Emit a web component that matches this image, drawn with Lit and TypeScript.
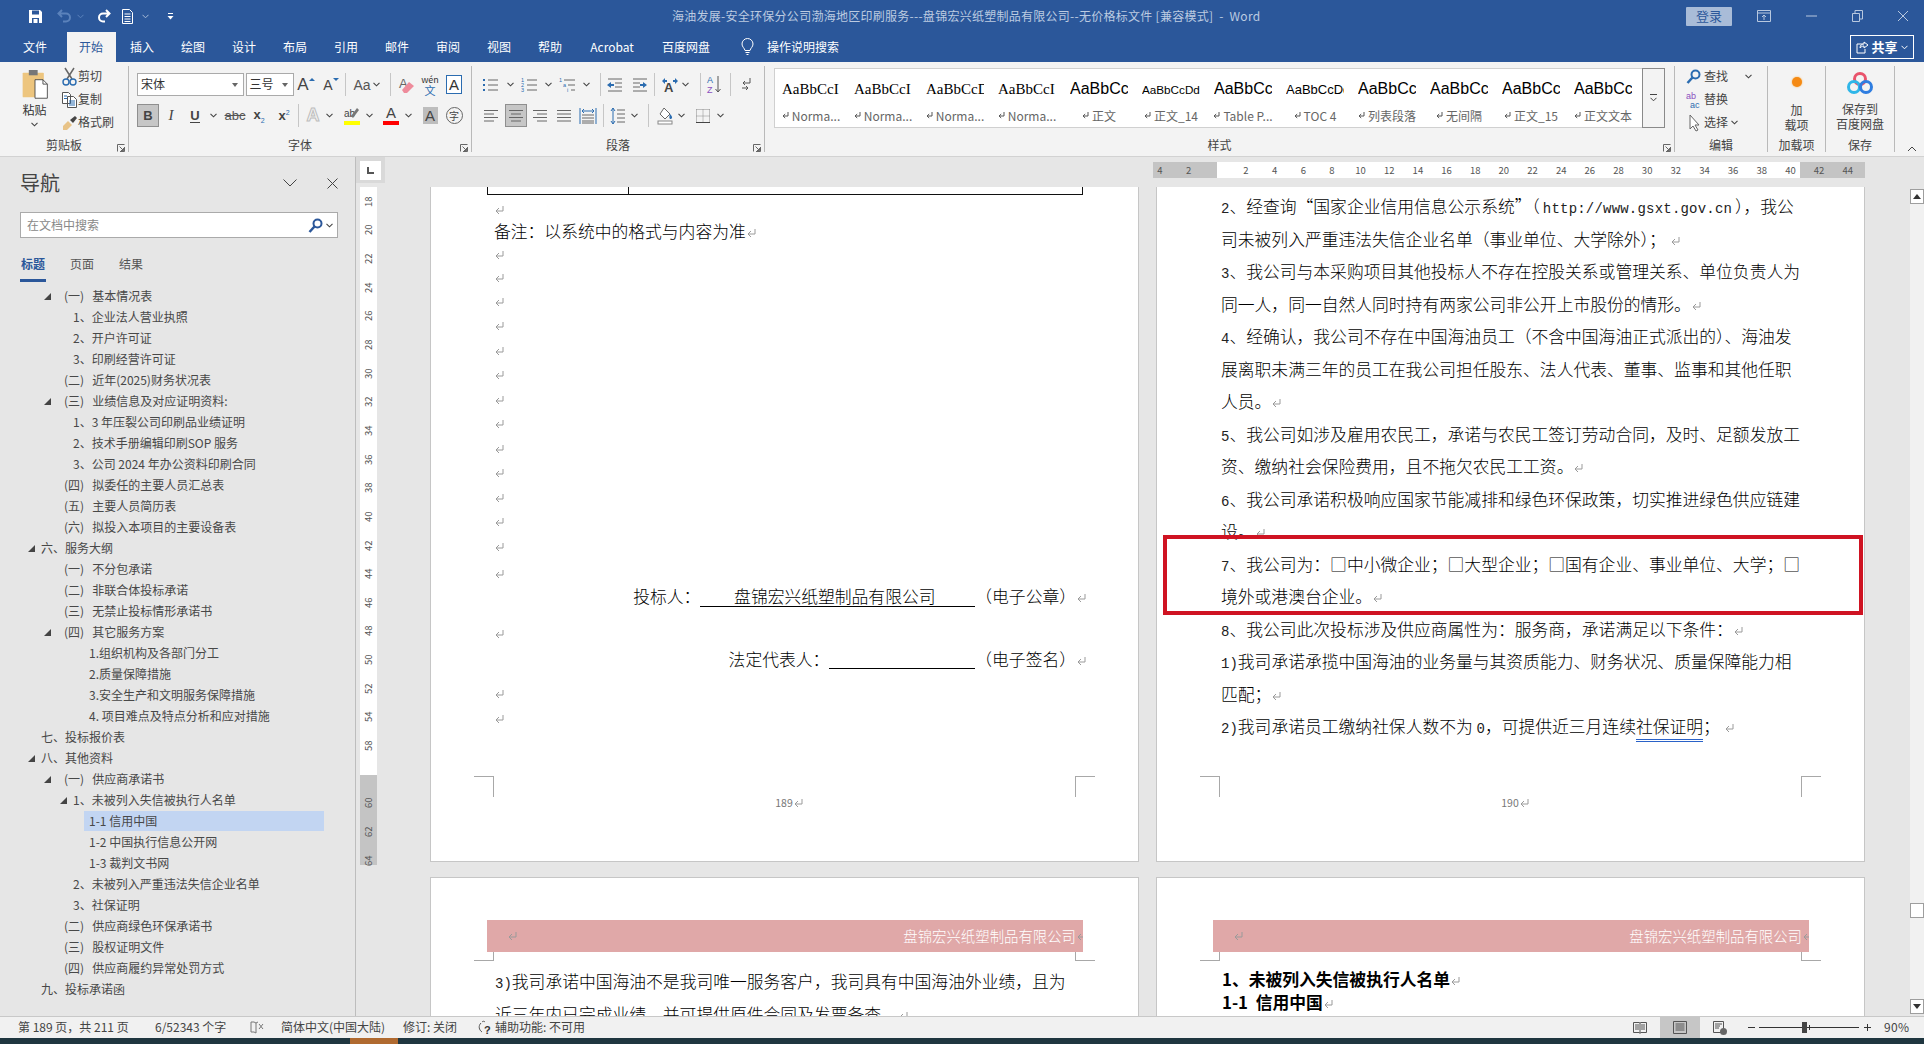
import { LitElement, html, css } from "lit";
import { customElement } from "lit/decorators.js";

type T = unknown;
const cells = (start: number, items: [number, number, T][]) => {
  let x = start;
  return items.map(([c, w, t]) => {
    const left = c - w / 2;
    const ml = left - x;
    x = left + w;
    return html`<span class="cell" style="width:${w}px;margin-left:${ml}px">${t}</span>`;
  });
};
const chev = html`<svg width="7" height="5" viewBox="0 0 7 5"><path d="M.5.8 3.5 3.8 6.5.8" fill="none" stroke="#444" stroke-width="1.1"/></svg>`;
const pm = html`<svg class="pm" width="11" height="11" viewBox="0 0 11 11"><path d="M9 1v5H2M5 3 2 6l3 3" fill="none" stroke="#9a9a9a" stroke-width="1"/></svg>`;
const pmd = html`<svg width="7" height="8" viewBox="0 0 7 8"><path d="M6 0v4H1.5M3.2 2 1 4l2.2 2" fill="none" stroke="#555" stroke-width="1"/></svg>`;
const launcher = html`<svg width="8" height="8" viewBox="0 0 8 8"><path d="M.5 7.5V.5h7M7.5 3v4.500H3M2.500 2.500 6.500 6.500M6.500 4v2.500H4" fill="none" stroke="#666" stroke-width="1"/></svg>`;

const tabs = ["文件", "开始", "插入", "绘图", "设计", "布局", "引用", "邮件", "审阅", "视图", "帮助", "Acrobat", "百度网盘"];
const tabCx = [35, 91, 142, 193, 244, 295, 346, 397, 448, 499, 550, 612, 686];

type Nav = [number, number, string, boolean?];
const nav: Nav[] = [
  [64, 44, "(一)   基本情况表"], [73, 0, "1、企业法人营业执照"], [73, 0, "2、开户许可证"], [73, 0, "3、印刷经营许可证"],
  [64, 0, "(二)   近年(2025)财务状况表"], [64, 44, "(三)   业绩信息及对应证明资料:"], [73, 0, "1、3 年压裂公司印刷品业绩证明"],
  [73, 0, "2、技术手册编辑印刷SOP 服务"], [73, 0, "3、公司 2024 年办公资料印刷合同"], [64, 0, "(四)   拟委任的主要人员汇总表"],
  [64, 0, "(五)   主要人员简历表"], [64, 0, "(六)   拟投入本项目的主要设备表"], [41, 28, "六、服务大纲"], [64, 0, "(一)   不分包承诺"],
  [64, 0, "(二)   非联合体投标承诺"], [64, 0, "(三)   无禁止投标情形承诺书"], [64, 44, "(四)   其它服务方案"], [89, 0, "1.组织机构及各部门分工"],
  [89, 0, "2.质量保障措施"], [89, 0, "3.安全生产和文明服务保障措施"], [89, 0, "4. 项目难点及特点分析和应对措施"], [41, 0, "七、投标报价表"],
  [41, 28, "八、其他资料"], [64, 44, "(一)   供应商承诺书"], [73, 60, "1、未被列入失信被执行人名单"], [89, 0, "1-1 信用中国", true],
  [89, 0, "1-2 中国执行信息公开网"], [89, 0, "1-3 裁判文书网"], [73, 0, "2、未被列入严重违法失信企业名单"], [73, 0, "3、社保证明"],
  [64, 0, "(二)   供应商绿色环保承诺书"], [64, 0, "(三)   股权证明文件"], [64, 0, "(四)   供应商履约异常处罚方式"], [41, 0, "九、投标承诺函"],
];

const styles: [string, string, string][] = [
  ["AaBbCcI", "serif", "Norma..."], ["AaBbCcI", "serif", "Norma..."], ["AaBbCcD", "serif", "Norma..."], ["AaBbCcI", "serif", "Norma..."],
  ["AaBbCc", "sans", "正文"], ["AaBbCcDd", "small", "正文_14"], ["AaBbCc", "sans", "Table P..."], ["AaBbCcDd", "toc", "TOC 4"],
  ["AaBbCc", "sans", "列表段落"], ["AaBbCc", "sans", "无间隔"], ["AaBbCc", "sans", "正文_15"], ["AaBbCc", "sans", "正文文本"],
];

const hLabels = ["4", "2", "", ...Array.from({ length: 22 }, (_, i) => String((i + 1) * 2))];
const vLabels = [...Array.from({ length: 19 }, (_, i) => String(18 + i * 2)), "58", "", "60", "62", "64"];

const leftMarks = [209, 232, 254, 277, 301, 325, 350, 374, 399, 423, 448, 472, 497, 521, 546, 573, 597, 633, 658, 693, 718];

@customElement("app-root")
export class AppRoot extends LitElement {
  static styles = css`
    :host { display: block; width: 1924px; height: 1044px; overflow: hidden; position: relative; background: #e6e6e6; color: #444;
      font: 12px/1.2 "Noto Sans CJK SC", "Liberation Sans", sans-serif; }
    svg { display: block; flex: none; }
    .cell { display: inline-flex; align-items: center; justify-content: center; height: 100%; flex: none; white-space: nowrap; }
    .title { height: 32px; background: #2b579a; display: flex; align-items: center; color: #fff; }
    .qat { width: 672px; height: 30px; display: flex; align-items: center; flex: none; }
    .wtitle { width: 588px; flex: none; color: #bccbe1; white-space: pre; font-size: 12px; letter-spacing: .27px; text-align: center; }
    .login { margin-left: 426px; width: 46px; height: 19px; background: #a9bcd8; color: #2b579a; border-radius: 1px; display: flex; align-items: center; justify-content: center; font-size: 13px; flex: none; }
    .wbtns { height: 30px; display: flex; align-items: center; }
    .tabs { height: 30px; background: #2b579a; display: flex; align-items: stretch; color: #fff; }
    .tab-on { background: #f3f3f3; color: #2b579a; height: 100%; width: 100%; display: flex; align-items: center; justify-content: center; }
    .share { margin: 3px 10px 3px 0; width: 64px; box-sizing: border-box; border: 1px solid #fff; display: flex; align-items: center; justify-content: center; gap: 3px; font-weight: 700; font-size: 13px; height: 24px; }
    .ribbon { height: 94px; background: #f3f3f3; border-bottom: 1px solid #d2d2d2; display: flex; box-sizing: content-box; padding: 0; position: relative; }
    .grp { height: 86px; margin-top: 4px; border-right: 1px solid #b9b9b9; box-sizing: border-box; position: relative; display: flex; flex-direction: column; flex: none; }
    .grp .rb { height: 71px; flex: none; }
    .grp .lbl { height: 15px; line-height: 15px; display: flex; justify-content: center; align-items: center; color: #444; position: relative; }
    .lbl .lch { position: absolute; right: 3px; top: 7px; }
    .clip { display: flex; }
    .paste { width: 69px; padding-top: 4px; display: flex; flex-direction: column; align-items: center; box-sizing: border-box; padding-right: 0; }
    .paste span { margin-top: 2px; font-size: 12px; color: #333; line-height: 16px; }
    .paste svg:last-child { margin-top: 4px; }
    .cliprows { display: flex; flex-direction: column; gap: 2px; margin-left: -7px; }
    .cliprows div { display: flex; align-items: center; height: 21px; gap: 1px; color: #444; font-size: 12px; }
    .frow { display: flex; height: 23px; }
    .frow.one { margin-top: 7px; }
    .frow.two { margin-top: 8px; }
    .sel { height: 23px; box-sizing: border-box; background: #fff; border: 1px solid #aaa; width: 100%; display: flex; align-items: center; justify-content: space-between; padding: 0 5px 0 3px; font-size: 12px; color: #333; }
    .caret { width: 0; height: 0; border: 3.500px solid transparent; border-top: 4px solid #666; border-bottom: 0; }
    .sep { width: 1px; height: 23px; background: #c6c6c6; }
    .bigA { font: 17px "Liberation Sans", sans-serif; color: #444; position: relative; }
    .smA { font-size: 14px; }
    .up { width: 0; height: 0; border: 3px solid transparent; border-bottom: 3px solid #2b6cb0; border-top: 0; align-self: flex-start; margin-top: 5px; }
    .dn { width: 0; height: 0; border: 3px solid transparent; border-top: 3px solid #2b6cb0; border-bottom: 0; align-self: flex-start; margin-top: 5px; }
    .aa { font: 14px "Liberation Sans", sans-serif; color: #555; }
    .wen { display: flex; flex-direction: column; align-items: center; line-height: 10px; font-size: 9px; color: #333; }
    .wen b { font-weight: 400; color: #2b6cb0; font-size: 11px; }
    .abox { border: 1px solid #2b6cb0; width: 14px; height: 17px; display: flex; align-items: center; justify-content: center; font: 15px "Liberation Sans", sans-serif; color: #333; background: #fff; }
    .on { background: #c6c6c6; outline: 1px solid #8f8f8f; outline-offset: -1px; }
    .fb { font: 700 13px "Liberation Sans", sans-serif; color: #444; }
    .fi { font: italic 15px "Liberation Serif", serif; color: #444; }
    .fu { font: 700 13px "Liberation Sans", sans-serif; color: #444; border-bottom: 1px solid #444; line-height: 13px; }
    .abc { font: 13px "Liberation Sans", sans-serif; color: #555; text-decoration: line-through; }
    .xs { font: 700 13px "Liberation Sans", sans-serif; color: #444; }
    .xs sub, .xs sup { font: 7px "Liberation Sans", sans-serif; color: #2b6cb0; }
    .oa { font: 700 18px "Liberation Sans", sans-serif; color: #f3f3f3; -webkit-text-stroke: 1px #bdbdbd; }
    .barA { display: flex; flex-direction: column; align-items: center; font: 15px/14px "Liberation Sans", sans-serif; color: #444; width: 16px; }
    .barA i { display: block; width: 16px; height: 4px; margin-top: 1px; }
    .gA { background: #bdbdbd; width: 15px; height: 17px; display: flex; align-items: center; justify-content: center; font: 15px "Liberation Sans", sans-serif; color: #444; }
    .zi { width: 15px; height: 15px; border: 1px solid #666; border-radius: 50%; display: flex; align-items: center; justify-content: center; font-size: 10px; color: #444; }
    .gallery { width: 891px; height: 60px; margin: 2px 0 0 9px; background: #fff; border: 1px solid #d0d0d0; box-sizing: border-box; display: flex; }
    .sty { width: 72px; height: 100%; flex: none; display: flex; flex-direction: column; align-items: center; box-sizing: border-box; overflow: hidden; }
    .smp { height: 38px; width: 58px; overflow: hidden; display: flex; align-items: center; white-space: nowrap; color: #000; margin-top: 1px; }
    .smp.serif { font: 15px "Liberation Serif", serif; }
    .smp.sans { font: 16px "Liberation Sans", sans-serif; }
    .smp.small { font: 11.700px "Liberation Sans", sans-serif; }
    .smp.toc { font: 13px "Liberation Sans", sans-serif; }
    .stl { display: flex; align-items: center; gap: 3px; color: #666; font-size: 12px; height: 16px; white-space: nowrap; }
    .more { width: 23px; flex: none; border: 1px solid #8a8a8a; background: #f3f3f3; box-sizing: border-box; margin: -1px -1px -1px auto; display: flex; flex-direction: column; align-items: center; justify-content: center; gap: 2px; }
    .more i { display: block; width: 7px; height: 1px; background: #444; }
    .edit { display: flex; flex-direction: column; gap: 2px; padding-left: 11px; }
    .edit div { display: flex; align-items: center; gap: 3px; height: 21px; font-size: 12px; }
    .addin { display: flex; flex-direction: column; align-items: center; color: #444; font-size: 12px; line-height: 15px; text-align: center; }
    .dot { width: 10px; height: 10px; border-radius: 50%; background: #f58a14; box-shadow: 0 0 2px #f9b04f; margin: 11px 0 15px; }
    .baidu { margin: 5px 0 6px; }
    .coll { position: absolute; left: 1907px; top: 84px; }
    .main { height: 859px; display: flex; overflow: hidden; }
    .nav { width: 356px; flex: none; box-sizing: border-box; border-right: 1px solid #bdbdbd; background: #e6e6e6; position: relative; }
    .navh { display: flex; align-items: center; height: 40px; padding: 6px 0 0 20px; box-sizing: content-box; }
    .navh h2 { margin: 0; font-size: 20px; font-weight: 400; color: #444; width: 263px; line-height: 40px; }
    .navh svg:last-child { margin-left: 30px; }
    .search { margin: 9px 0 0 20px; width: 318px; height: 26px; background: #fff; border: 1px solid #aaa; box-sizing: border-box; display: flex; align-items: center; padding: 0 4px 0 6px; color: #888; }
    .search span { flex: 1; }
    .ntabs { display: flex; margin: 19px 0 0 21px; height: 27px; gap: 25px; font-size: 12px; color: #555; }
    .ntabs .act { color: #2b579a; font-weight: 700; position: relative; }
    .ntabs .act::after { content: ""; position: absolute; left: -1px; right: -1px; top: 22px; height: 3px; background: #2b579a; }
    .tree { margin-top: 2px; }
    .nr { height: 21px; display: flex; align-items: center; white-space: pre; color: #484848; font-size: 12px; }
    .nr.hl { background: #c2d5f2; height: 20px; margin: 0 0 1px 84px; width: 240px; padding-left: 5px; box-sizing: border-box; }
    .work { flex: 1; display: flex; flex-direction: column; min-width: 0; }
    .top { height: 30px; display: flex; flex: none; }
    .lbox { width: 29px; height: 26px; background: #d9d9d9; display: flex; align-items: center; justify-content: center; flex: none; }
    .lbox div { width: 21px; height: 19px; background: #fff; display: flex; align-items: center; justify-content: center; }
    .hr { margin: 5px 0 0 760.670px; height: 16px; width: 720px; display: flex; font-size: 9.500px; color: #555;
      background: linear-gradient(90deg, transparent 7.330px, #c4c4c4 7.330px, #c4c4c4 71.330px, #fff 71.330px, #fff 654.330px, #c4c4c4 654.330px, #c4c4c4 719.330px, transparent 719.330px); }
    .hr span { width: 28.670px; flex: none; text-align: center; line-height: 16px; }
    .wb { flex: 1; display: flex; min-height: 0; }
    .vr { width: 17px; margin: 0 0 0 4px; flex: none; height: 678px; display: flex; flex-direction: column; font-size: 9.500px; color: #555;
      background: linear-gradient(180deg, #fff 0, #fff 588px, #c4c4c4 588px, #c4c4c4 678px); }
    .vr span { height: 28.670px; flex: none; display: flex; align-items: center; justify-content: center; }
    .vr span b { font-weight: 400; transform: rotate(-90deg); display: block; }
    .pages { margin-left: 53px; display: grid; grid-template-columns: 709px 709px; grid-auto-rows: 675px; column-gap: 17px; row-gap: 15px; flex: none; width: 1435px; }
    .page { background: #fff; border: 1px solid #c6c6c6; border-top: 0; box-sizing: border-box; display: flex; flex-direction: column; color: #000; position: relative; }
    .page.b { border-top: 1px solid #c6c6c6; }
    .pm { display: inline-block; vertical-align: -1px; }
    .pmx { margin-left: 4px; }
    .dt { font: 300 16.800px/32.500px "Noto Sans CJK SC", sans-serif; white-space: pre; }
    .m { font: 14px "Liberation Mono", monospace; color: #222; }
    .url { letter-spacing: .2px; margin: 0 3px; }
    .rtext { padding: 3px 0 0 64px; }
    .dbl { border-bottom: 3px double #2a62c8; padding-bottom: 1px; }
    .foot { margin-top: auto; height: 85px; flex: none; display: flex; align-items: flex-start; justify-content: space-between; padding: 0 43px; box-sizing: border-box; }
    .mk { width: 20px; height: 21px; box-sizing: border-box; border-top: 1px solid #a8a8a8; }
    .mk.l { border-right: 1px solid #a8a8a8; }
    .mk.r { border-left: 1px solid #a8a8a8; }
    .pn { margin: 19px 0 0 10px; font-size: 10.500px; line-height: 16px; color: #777; display: flex; align-items: center; }
    .tbl { margin-left: 56px; width: 596px; height: 8px; flex: none; border: 1.500px solid #111; border-top: 0; box-sizing: border-box; }
    .tbl div { width: 140px; height: 100%; border-right: 1.500px solid #111; }
    .lr { height: 20px; padding-left: 63px; display: block; flex: none; font: 300 16.800px/20px "Noto Sans CJK SC", sans-serif; white-space: pre; }
    .lr.end { padding: 0 51px 0 0; text-align: right; }
    .u1 { width: 275px; border-bottom: 1px solid #000; text-align: center; display: inline-block; line-height: 20px; height: 21px; box-sizing: border-box; padding-right: 6px; }
    .u2 { width: 146px; border-bottom: 1px solid #000; display: inline-block; height: 21px; vertical-align: bottom; }
    .hdr { margin: 42px 0 0 56px; width: 596px; height: 32px; flex: none; background: #e0a8a8; color: #fff; display: flex; align-items: center; justify-content: space-between; padding: 0 0 0 20px; font-size: 14.400px; font-weight: 300; box-sizing: border-box; overflow: hidden; }
    .hdr div { display: flex; align-items: center; }
    .hdr div:last-child .pm { margin-right: -4px; }
    .hmk { display: flex; justify-content: space-between; padding: 0 43px; height: 9px; flex: none; }
    .hmk div { width: 20px; height: 9px; box-sizing: border-box; border-bottom: 1px solid #a8a8a8; }
    .hmk .l { border-right: 1px solid #a8a8a8; }
    .hmk .r { border-left: 1px solid #a8a8a8; }
    .ptxt { padding: 4px 0 0 64px; }
    .ptxt2 { padding: 7px 0 0 65px; }
    .ptxt2 .dt { font-weight: 700; line-height: 23px; }
    .redbox { position: absolute; left: 6px; top: 348px; width: 700px; height: 80px; box-sizing: border-box; border: 4px solid #cf1322; pointer-events: none; }
    .sb { width: 14px; height: 825px; margin: 2px 0 0 auto; background: #f1f1f1; display: flex; flex-direction: column; flex: none; }
    .sb div { height: 15px; width: 14px; box-sizing: border-box; background: #fff; border: 1px solid #9e9e9e; display: flex; align-items: center; justify-content: center; flex: none; }
    .sb .thumb { margin-top: 699px; }
    .sb .dnb { margin-top: auto; }
    .status { height: 22px; box-sizing: border-box; background: #f1f1f1; border-top: 1px solid #c8c8c8; display: flex; align-items: stretch; font-size: 12px; color: #444; }
    .status .cell { justify-content: flex-start; }
    .vb { width: 40px; display: flex; align-items: center; justify-content: center; flex: none; }
    .vb.act { background: #c6c6c6; }
    .slider { width: 100px; height: 1px; background: #333; position: relative; align-self: center; flex: none; margin-left: 3px; }
    .slider i { position: absolute; left: 43px; top: -5px; width: 5px; height: 11px; background: #444; }
    .slider b { position: absolute; left: 50px; top: -2px; width: 1px; height: 5px; background: #333; }
    .strip { height: 6px; background: #1f3640; display: flex; }
    .strip i { display: block; width: 48px; margin-left: 350px; background: #b06a30; }
  `;

  private font1() {
    return cells(129, [
      [190.5, 107, html`<div class="sel"><span>宋体</span><i class="caret"></i></div>`],
      [269.5, 48, html`<div class="sel"><span>三号</span><i class="caret"></i></div>`],
      [306, 22, html`<span class="bigA">A</span><i class="up"></i>`],
      [331, 22, html`<span class="bigA smA">A</span><i class="dn"></i>`],
      [345, 1, html`<i class="sep"></i>`],
      [362, 22, html`<span class="aa">Aa</span>`],
      [376, 8, chev],
      [390, 1, html`<i class="sep"></i>`],
      [406, 20, html`<svg width="17" height="18" viewBox="0 0 17 18"><text x="1" y="12" font-size="13" font-family="Liberation Sans" fill="#666">A</text><path d="M4 14 11 6l5 4-7 7H6z" fill="#ee8b9b"/></svg>`],
      [430, 20, html`<span class="wen">wén<b>文</b></span>`],
      [454, 18, html`<span class="abox">A</span>`],
    ]);
  }
  private font2() {
    return cells(129, [
      [148, 22, html`<span class="cell on" style="width:22px"><span class="fb">B</span></span>`],
      [171, 16, html`<span class="fi">I</span>`],
      [195, 16, html`<span class="fu">U</span>`],
      [213, 8, chev],
      [235, 22, html`<span class="abc">abc</span>`],
      [259, 18, html`<span class="xs">x<sub>2</sub></span>`],
      [284, 18, html`<span class="xs">x<sup>2</sup></span>`],
      [298, 1, html`<i class="sep"></i>`],
      [313, 18, html`<span class="oa">A</span>`],
      [329, 8, chev],
      [352, 18, html`<span class="barA"><svg width="16" height="13" viewBox="0 0 16 13"><text x="0" y="10" font-size="10" font-family="Liberation Sans" fill="#444">ab</text><path d="M9 11 15 3l-2-2-6 8z" fill="#777"/></svg><i style="background:#ff0"></i></span>`],
      [369, 8, chev],
      [391, 18, html`<span class="barA">A<i style="background:#f00"></i></span>`],
      [408, 8, chev],
      [430, 16, html`<span class="gA">A</span>`],
      [454, 18, html`<span class="zi">字</span>`],
    ]);
  }
  private para1() {
    const bul = html`<svg width="18" height="16" viewBox="0 0 18 16"><path d="M1 2h2v2H1zM1 7h2v2H1zM1 12h2v2H1z" fill="#2b6cb0"/><path d="M6 3h10M6 8h10M6 13h10" stroke="#666"/></svg>`;
    const num = html`<svg width="18" height="16" viewBox="0 0 18 16"><text y="5" font-size="5.500" fill="#2b6cb0" font-family="Liberation Sans">1</text><text y="10" font-size="5.500" fill="#2b6cb0" font-family="Liberation Sans">2</text><text y="15" font-size="5.500" fill="#2b6cb0" font-family="Liberation Sans">3</text><path d="M6 3h10M6 8h10M6 13h10" stroke="#666"/></svg>`;
    const ml = html`<svg width="18" height="16" viewBox="0 0 18 16"><text y="5" font-size="5.500" fill="#2b6cb0" font-family="Liberation Sans">1</text><text x="4" y="10" font-size="5.500" fill="#2b6cb0" font-family="Liberation Sans">a</text><text x="8" y="15" font-size="5.500" fill="#2b6cb0" font-family="Liberation Sans">i</text><path d="M5 3h11M9 8h7M12 13h4" stroke="#666"/></svg>`;
    const indL = html`<svg width="18" height="16" viewBox="0 0 18 16"><path d="M2 2h14M9 6h7M9 10h7M2 14h14" stroke="#666"/><path d="M1 8l4-3v2h3v2H5v2z" fill="#2b6cb0"/></svg>`;
    const indR = html`<svg width="18" height="16" viewBox="0 0 18 16"><path d="M2 2h14M2 6h7M2 10h7M2 14h14" stroke="#666"/><path d="M16 8l-4-3v2H9v2h3v2z" fill="#2b6cb0"/></svg>`;
    return cells(472, [
      [491, 18, bul], [510, 8, chev], [530, 18, num], [548, 8, chev], [568, 18, ml], [586, 8, chev],
      [600, 1, html`<i class="sep"></i>`], [615, 18, indL], [640, 18, indR],
      [654, 1, html`<i class="sep"></i>`],
      [670, 18, html`<svg width="18" height="16" viewBox="0 0 18 16"><text x="3" y="15" font-size="13" font-weight="700" font-family="Liberation Sans" fill="#444">A</text><path d="M1 4l3-3v2h2v2H4v2zM17 4l-3-3v2h-2v2h2v2z" fill="#2b6cb0"/></svg>`],
      [685, 8, chev], [700, 1, html`<i class="sep"></i>`],
      [715, 18, html`<svg width="18" height="20" viewBox="0 0 18 20"><text x="1" y="8" font-size="9" font-family="Liberation Sans" fill="#2b6cb0">A</text><text x="1" y="18" font-size="9" font-family="Liberation Sans" fill="#8a4fc0">Z</text><path d="M12 1v16M9.500 14l2.500 3 2.500-3" fill="none" stroke="#555"/></svg>`],
      [730, 1, html`<i class="sep"></i>`],
      [746, 14, html`<svg width="12" height="16" viewBox="0 0 12 16"><path d="M10 1v5H3M5 4 3 6l2 2M2 11h6M6 9l2 2-2 2" fill="none" stroke="#555"/></svg>`],
    ]);
  }
  private para2() {
    const al = (r: number[]) => html`<svg width="16" height="14" viewBox="0 0 16 14"><path d="M${r[0]} 1.500H${r[1]}M${r[2]} 5H${r[3]}M${r[0]} 8.500H${r[1]}M${r[2]} 12H${r[3]}" stroke="#666"/></svg>`;
    return cells(472, [
      [491, 18, al([1, 15, 1, 11])],
      [516, 22, html`<span class="cell on" style="width:22px">${al([1, 15, 3, 13])}</span>`],
      [540, 18, al([1, 15, 5, 15])],
      [564, 18, al([1, 15, 1, 15])],
      [588, 18, html`<svg width="18" height="18" viewBox="0 0 18 18"><path d="M1 1v16M17 1v16" stroke="#2b6cb0"/><path d="M3 4h12M5 2 3 4l2 2M13 2l2 2-2 2" fill="none" stroke="#2b6cb0"/><path d="M3 8h12M3 11h12M3 14h12M3 16h12" stroke="#666"/></svg>`],
      [603, 1, html`<i class="sep"></i>`],
      [618, 18, html`<svg width="16" height="18" viewBox="0 0 16 18"><path d="M3 1v16M1 4l2-3 2 3M1 14l2 3 2-3" fill="none" stroke="#2b6cb0"/><path d="M7 3h8M7 7h8M7 11h8M7 15h8" stroke="#666"/></svg>`],
      [634, 8, chev],
      [648, 1, html`<i class="sep"></i>`],
      [665, 18, html`<svg width="17" height="18" viewBox="0 0 17 18"><path d="M7 1l6 6-5 5-5-5z" fill="#fff" stroke="#666"/><path d="M13 7c2 2 3 4 1 5-2 0-2-2-1-5z" fill="#2b6cb0"/><rect x="1" y="14" width="14" height="3" fill="#fff" stroke="#888"/></svg>`],
      [681, 8, chev],
      [703, 16, html`<svg width="14" height="14" viewBox="0 0 14 14"><path d="M.5.500h13M.5 7h13M.5.500v13M7 .500v13M13.500.500v13" stroke="#888" stroke-dasharray="1 1" fill="none"/><path d="M0 13.500h14" stroke="#444"/></svg>`],
      [720, 8, chev],
    ]);
  }

  render() {
    return html`
      <div class="title">
        <div class="qat">${cells(0, [
          [35, 16, html`<svg width="15" height="15" viewBox="0 0 15 15"><path d="M1 1h11l2 2v11H1z" fill="#fff"/><rect x="4" y="1.500" width="7" height="4" fill="#2b579a"/><rect x="4" y="9" width="7" height="5" fill="#2b579a"/><rect x="5.500" y="10" width="4" height="4" fill="#fff"/></svg>`],
          [64, 16, html`<svg width="15" height="14" viewBox="0 0 15 14"><path d="M5 1 1.500 4.500 5 8M2 4.500h7a4 4 0 0 1 0 8H6" fill="none" stroke="#5b82bb" stroke-width="2"/></svg>`],
          [80, 8, html`<svg width="7" height="5" viewBox="0 0 7 5"><path d="M.5.8 3.500 3.800 6.500.8" fill="none" stroke="#5b82bb"/></svg>`],
          [103, 16, html`<svg width="15" height="14" viewBox="0 0 15 14"><path d="M10 1l3.500 3.500L10 8M13 4.500H7a4 4 0 0 0 0 8h2" fill="none" stroke="#fff" stroke-width="2"/></svg>`],
          [127, 14, html`<svg width="11" height="15" viewBox="0 0 11 15"><path d="M.5.500h7l3 3v11H.5z" fill="none" stroke="#fff"/><path d="M2.500 5h6M2.500 7.500h6M2.500 10h6M2.500 12.500h6" stroke="#fff"/></svg>`],
          [145, 8, html`<svg width="7" height="5" viewBox="0 0 7 5"><path d="M.5.8 3.500 3.800 6.500.8" fill="none" stroke="#a9bcd8"/></svg>`],
          [170, 8, html`<svg width="7" height="7" viewBox="0 0 7 7"><path d="M1 .5h5" stroke="#fff"/><path d="M.5 3h6L3.500 6.500z" fill="#fff"/></svg>`],
        ])}</div>
        <div class="wtitle">海油发展-安全环保分公司渤海地区印刷服务---盘锦宏兴纸塑制品有限公司--无价格标文件 [兼容模式]  -  Word</div>
        <div class="login">登录</div>
        <div class="wbtns">${cells(1732, [
          [1764, 16, html`<svg width="14" height="12" viewBox="0 0 14 12"><path d="M.5.500h13v11H.5zM.5 3h13M7 10V5M5 7l2-2 2 2" fill="none" stroke="#b8c8df"/></svg>`],
          [1811, 16, html`<svg width="11" height="2" viewBox="0 0 11 2"><path d="M0 1h11" stroke="#b8c8df"/></svg>`],
          [1857, 16, html`<svg width="11" height="12" viewBox="0 0 11 12"><path d="M.5 3.500h7v8h-7zM3 3.500V.500h7.500V9H8" fill="none" stroke="#b8c8df"/></svg>`],
          [1903, 16, html`<svg width="12" height="12" viewBox="0 0 12 12"><path d="M1 1l10 10M11 1 1 11" stroke="#b8c8df"/></svg>`],
        ])}</div>
      </div>
      <div class="tabs">
        ${cells(0, tabs.map((t, i) => [tabCx[i], t === "Acrobat" ? 50 : t === "百度网盘" ? 50 : t === "文件" ? 40 : 49, i === 1 ? html`<span class="tab-on">${t}</span>` : t] as [number, number, T]))}
        <span class="cell" style="width:18px;margin-left:27px"><svg width="13" height="18" viewBox="0 0 13 18"><path d="M4 12.500C3.500 10 1 9 1 6a5.500 5.500 0 0 1 11 0c0 3-2.500 4-3 6.500zM4.500 14.500h4M5.500 16.500h2" fill="none" stroke="#fff"/></svg></span>
        <span class="cell" style="width:72px;margin-left:11px">操作说明搜索</span>
        <span style="flex:1"></span>
        <div class="share"><svg width="12" height="14" viewBox="0 0 12 14"><path d="M7 4H1v9h8V9M4 8c0-3 2-4 4-4V2l4 3-4 3V6C6 6 5 7 4 8z" fill="none" stroke="#fff"/></svg>共享<svg width="7" height="5" viewBox="0 0 7 5"><path d="M.5.8 3.500 3.800 6.500.8" fill="none" stroke="#fff"/></svg></div>
      </div>
      <div class="ribbon">
        <div class="grp" style="width:129px">
          <div class="rb clip">
            <div class="paste">
              <svg width="30" height="30" viewBox="0 0 30 34"><rect x="1" y="3" width="24" height="28" rx="1" fill="#edc57e"/><rect x="8" y="0" width="10" height="6" fill="#777"/><path d="M15 11h9l5 5v16H15z" fill="#fff" stroke="#444"/><path d="M24 11v5h5" fill="none" stroke="#444"/></svg>
              <span>粘贴</span>${chev}
            </div>
            <div class="cliprows">
              <div><svg width="15" height="19" viewBox="0 0 15 19"><path d="M3 1l7 11M12 1 5 12" stroke="#666" stroke-width="1.500"/><circle cx="4" cy="15" r="3" fill="none" stroke="#2b6cb0" stroke-width="1.400"/><circle cx="11" cy="15" r="3" fill="none" stroke="#2b6cb0" stroke-width="1.400"/></svg><span>剪切</span></div>
              <div><svg width="15" height="16" viewBox="0 0 15 16"><path d="M.5.500h6l2 2v9h-8zM5.500 4.500h6l3 3v8h-9z" fill="#fff" stroke="#555"/><path d="M2 4h3M2 6.500h3M7 9h6M7 11h6M7 13h6" stroke="#2b6cb0"/></svg><span>复制</span></div>
              <div><svg width="15" height="16" viewBox="0 0 15 16"><path d="M1 11l5-5 4 4-5 5-4 0z" fill="#e8c387"/><path d="M8 5l5-4 2 2-4 5z" fill="#444"/></svg><span>格式刷</span></div>
            </div>
          </div>
          <div class="lbl">剪贴板<span class="lch">${launcher}</span></div>
        </div>
        <div class="grp" style="width:343px">
          <div class="rb"><div class="frow one">${this.font1()}</div><div class="frow two">${this.font2()}</div></div>
          <div class="lbl">字体<span class="lch">${launcher}</span></div>
        </div>
        <div class="grp" style="width:293px">
          <div class="rb"><div class="frow one">${this.para1()}</div><div class="frow two">${this.para2()}</div></div>
          <div class="lbl">段落<span class="lch">${launcher}</span></div>
        </div>
        <div class="grp" style="width:910px">
          <div class="rb">
            <div class="gallery">
              ${styles.map(([s, c, l]) => html`<div class="sty"><div class="smp ${c}">${s}</div><div class="stl">${pmd}${l}</div></div>`)}
              <div class="more"><i></i><svg width="7" height="5" viewBox="0 0 7 5"><path d="M.5.8 3.500 3.800 6.500.8" fill="none" stroke="#444"/></svg></div>
            </div>
          </div>
          <div class="lbl">样式<span class="lch">${launcher}</span></div>
        </div>
        <div class="grp" style="width:93px">
          <div class="rb edit">
            <div><svg width="15" height="16" viewBox="0 0 15 16"><circle cx="9.500" cy="5.500" r="4" fill="none" stroke="#2b6cb0" stroke-width="2"/><path d="M6.500 8.500 1.500 14" stroke="#2b6cb0" stroke-width="2.500"/></svg><span>查找</span><span style="margin-left:14px">${chev}</span></div>
            <div><svg width="15" height="18" viewBox="0 0 15 18"><text x="0" y="8" font-size="9" font-family="Liberation Sans" fill="#8a4fc0">ab</text><text x="4" y="17" font-size="9" font-family="Liberation Sans" fill="#2b6cb0">ac</text></svg><span>替换</span></div>
            <div><svg width="15" height="18" viewBox="0 0 15 18"><path d="M4 1v14l3-3 3 5 2-1-3-5h4z" fill="#fff" stroke="#666"/></svg><span>选择</span>${chev}</div>
          </div>
          <div class="lbl">编辑</div>
        </div>
        <div class="grp" style="width:58px">
          <div class="rb addin"><i class="dot"></i>加<br />载项</div>
          <div class="lbl">加载项</div>
        </div>
        <div class="grp" style="width:69px">
          <div class="rb addin">
            <svg class="baidu" width="26" height="24" viewBox="0 0 26 24"><circle cx="13" cy="8" r="5.500" fill="none" stroke="#e9536b" stroke-width="3"/><circle cx="7" cy="16" r="5.500" fill="none" stroke="#2fb6e8" stroke-width="3"/><circle cx="19" cy="16" r="5.500" fill="none" stroke="#2f7de0" stroke-width="3"/></svg>
            保存到<br />百度网盘
          </div>
          <div class="lbl">保存</div>
        </div>
        <svg class="coll" width="10" height="6" viewBox="0 0 10 6"><path d="M1 5 5 1l4 4" fill="none" stroke="#444"/></svg>
      </div>
      <div class="main">
        <div class="nav">
          <div class="navh"><h2>导航</h2>
            <svg width="14" height="8" viewBox="0 0 14 8"><path d="M.5.500 7 7 13.500.500" fill="none" stroke="#444"/></svg>
            <svg width="11" height="11" viewBox="0 0 11 11"><path d="M.5.500l10 10M10.500.500l-10 10" stroke="#444"/></svg>
          </div>
          <div class="search"><span>在文档中搜索</span>
            <svg width="15" height="15" viewBox="0 0 15 15"><circle cx="9.500" cy="5.500" r="4" fill="none" stroke="#2b579a" stroke-width="2"/><path d="M6.500 8.500 1.500 14" stroke="#2b579a" stroke-width="2.500"/></svg>
            <span style="flex:none;margin-left:3px">${chev}</span>
          </div>
          <div class="ntabs"><span class="act">标题</span><span>页面</span><span>结果</span></div>
          <div class="tree">
            ${nav.map(([x, tri, t, sel]) => sel ? html`<div class="nr hl">${t}</div>` : html`<div class="nr" style="padding-left:${tri || x}px">${tri ? html`<svg width="7" height="7" viewBox="0 0 7 7" style="margin-right:${x - tri - 7}px"><path d="M7 0v7H0z" fill="#444"/></svg>` : ""}${t}</div>`)}
          </div>
        </div>
        <div class="work">
          <div class="top">
            <div class="lbox"><div><svg width="7" height="7" viewBox="0 0 7 7"><path d="M1 0v6h6" fill="none" stroke="#555" stroke-width="2"/></svg></div></div>
            <div class="hr">${hLabels.map((l) => html`<span>${l}</span>`)}</div>
          </div>
          <div class="wb">
            <div class="vr">${vLabels.map((l) => html`<span><b>${l}</b></span>`)}</div>
            <div class="pages">
              <div class="page">
                <div class="tbl"><div></div></div>
                ${this.leftPage()}
                <div class="foot"><div class="mk l"></div><div class="pn">189${pm}</div><div class="mk r"></div></div>
              </div>
              <div class="page">
                <div class="rtext">
                  <div class="dt"><span class="m">2</span>、经查询“国家企业信用信息公示系统”（<span class="m url">http://www.gsxt.gov.cn</span>），我公</div>
                  <div class="dt">司未被列入严重违法失信企业名单（事业单位、大学除外）；<span class="pmx">${pm}</span></div>
                  <div class="dt"><span class="m">3</span>、我公司与本采购项目其他投标人不存在控股关系或管理关系、单位负责人为</div>
                  <div class="dt">同一人，同一自然人同时持有两家公司非公开上市股份的情形。${pm}</div>
                  <div class="dt"><span class="m">4</span>、经确认，我公司不存在中国海油员工（不含中国海油正式派出的）、海油发</div>
                  <div class="dt">展离职未满三年的员工在我公司担任股东、法人代表、董事、监事和其他任职</div>
                  <div class="dt">人员。${pm}</div>
                  <div class="dt"><span class="m">5</span>、我公司如涉及雇用农民工，承诺与农民工签订劳动合同，及时、足额发放工</div>
                  <div class="dt">资、缴纳社会保险费用，且不拖欠农民工工资。${pm}</div>
                  <div class="dt"><span class="m">6</span>、我公司承诺积极响应国家节能减排和绿色环保政策，切实推进绿色供应链建</div>
                  <div class="dt">设。${pm}</div>
                  <div class="dt"><span class="m">7</span>、我公司为：□中小微企业；□大型企业；□国有企业、事业单位、大学；□</div>
                  <div class="dt">境外或港澳台企业。${pm}</div>
                  <div class="dt"><span class="m">8</span>、我公司此次投标涉及供应商属性为：服务商，承诺满足以下条件：${pm}</div>
                  <div class="dt"><span class="m">1)</span>我司承诺承揽中国海油的业务量与其资质能力、财务状况、质量保障能力相</div>
                  <div class="dt">匹配；${pm}</div>
                  <div class="dt"><span class="m">2)</span>我司承诺员工缴纳社保人数不为 <span class="m">0</span>，可提供近三月连续<span class="dbl">社保证明</span>； ${pm}</div>
                </div>
                <div class="foot"><div class="mk l"></div><div class="pn">190${pm}</div><div class="mk r"></div></div>
                <div class="redbox"></div>
              </div>
              <div class="page b">
                <div class="hdr"><div>${pm}</div><div>盘锦宏兴纸塑制品有限公司${pm}</div></div>
                <div class="hmk"><div class="l"></div><div class="r"></div></div>
                <div class="ptxt">
                  <div class="dt"><span class="m">3)</span>我司承诺中国海油不是我司唯一服务客户，我司具有中国海油外业绩，且为</div>
                  <div class="dt">近三年内已完成业绩，并可提供原件合同及发票备查。${pm}</div>
                </div>
              </div>
              <div class="page b">
                <div class="hdr"><div>${pm}</div><div>盘锦宏兴纸塑制品有限公司${pm}</div></div>
                <div class="hmk"><div class="l"></div><div class="r"></div></div>
                <div class="ptxt2">
                  <div class="dt">1、未被列入失信被执行人名单${pm}</div>
                  <div class="dt">1-1  信用中国${pm}</div>
                </div>
              </div>
            </div>
            <div class="sb">
              <div><svg width="8" height="5" viewBox="0 0 8 5"><path d="M4 0l4 5H0z" fill="#333"/></svg></div>
              <div class="thumb"></div>
              <div class="dnb"><svg width="8" height="5" viewBox="0 0 8 5"><path d="M4 5 8 0H0z" fill="#333"/></svg></div>
            </div>
          </div>
        </div>
      </div>
      <div class="status">
        <span class="cell" style="width:137px;margin-left:18px">第 189 页，共 211 页</span>
        <span class="cell" style="width:95px">6/52343 个字</span>
        <span class="cell" style="width:31px"><svg width="14" height="13" viewBox="0 0 14 13"><path d="M1 1h3l2 1v10l-2-1H1zM6 2l2-1" fill="none" stroke="#777"/><path d="M9 3l4 5M13 3 9 8" stroke="#777"/></svg></span>
        <span class="cell" style="width:122px">简体中文(中国大陆)</span>
        <span class="cell" style="width:75px">修订: 关闭</span>
        <span class="cell" style="width:17px"><svg width="15" height="15" viewBox="0 0 15 15"><path d="M3 3c-3 3-2 7 1 9M7 2C6 1 5 1 4 2" fill="none" stroke="#555"/><text x="6" y="14" font-size="11" font-weight="700" font-family="Liberation Sans" fill="#333">?</text></svg></span>
        <span class="cell" style="width:120px">辅助功能: 不可用</span>
        <span style="margin-left:1005px" class="vb"><svg width="14" height="14" viewBox="0 0 14 14"><path d="M.5 1.500h6l.5 1 .5-1h6v10h-6l-.5 1-.5-1h-6zM7 2.500v9M2 4h4M2 6h4M2 8h4M8 4h4M8 6h4M8 8h4" fill="none" stroke="#555"/></svg></span>
        <span class="vb act"><svg width="14" height="13" viewBox="0 0 14 13"><path d="M.5.500h13v12H.5zM2.500 3h9M2.500 5h9M2.500 7h9M2.500 9h9" fill="none" stroke="#555"/></svg></span>
        <span class="vb"><svg width="14" height="14" viewBox="0 0 14 14"><path d="M.5.500h10v11H.5zM2 3h7M2 5h5M2 7h4" fill="none" stroke="#555"/><circle cx="10.500" cy="10.500" r="3.500" fill="#666"/></svg></span>
        <span class="cell" style="width:10px;margin-left:6px;justify-content:center"><svg width="7" height="1"><rect width="7" height="1" fill="#333"/></svg></span>
        <div class="slider"><i></i><b></b></div>
        <span class="cell" style="width:12px;margin-left:2px;justify-content:center"><svg width="7" height="7" viewBox="0 0 7 7"><path d="M0 3.500h7M3.500 0v7" stroke="#333"/></svg></span>
        <span class="cell" style="width:30px;margin-left:11px;letter-spacing:.3px">90%</span>
      </div>
      <div class="strip"><i></i></div>
    `;
  }

  private leftPage() {
    let prev = 195 + 10 - 20 + 1;
    const offs = leftMarks.map((c) => { const m = c - prev - 20; prev = c; return m; });
    const row = (i: number) => {
      const s = `margin-top:${offs[i]}px`;
      if (i === 1) return html`<div class="lr" style=${s}>备注：以系统中的格式与内容为准${pm}</div>`;
      if (i === 16) return html`<div class="lr end" style=${s}>投标人：<span class="u1">盘锦宏兴纸塑制品有限公司</span>（电子公章）${pm}</div>`;
      if (i === 18) return html`<div class="lr end" style=${s}>法定代表人：<span class="u2"></span>（电子签名）${pm}</div>`;
      return html`<div class="lr" style=${s}>${pm}</div>`;
    };
    return leftMarks.map((_, i) => row(i));
  }
}
